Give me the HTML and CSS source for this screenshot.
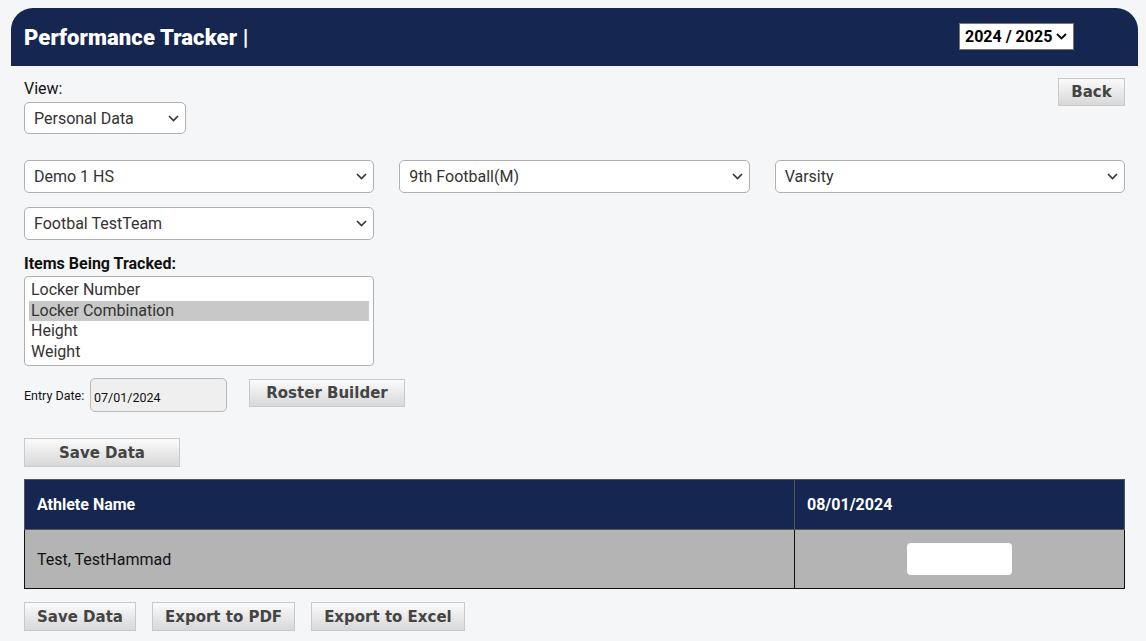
FILE: index.html
```html
<!DOCTYPE html>
<html lang="en">
<head>
<meta charset="utf-8">
<title>Performance Tracker</title>
<link rel="stylesheet" href="styles.css">
</head>
<body>
<div class="page">
  <header class="topbar">
    <h1 class="title">Performance Tracker |</h1>
    <div class="season">
      <span>2024 / 2025</span>
      <svg class="chev" width="11" height="7" viewBox="0 0 11 7"><path d="M1 1l4.5 4.5L10 1" fill="none" stroke="#000" stroke-width="1.8"/></svg>
    </div>
  </header>

  <main class="content">
    <div class="view-row">
      <div class="view-field">
        <label class="label">View:</label>
        <div class="select select-small">
          <span>Personal Data</span>
          <svg class="chev" width="11" height="7" viewBox="0 0 11 7"><path d="M1 1l4.5 4.5L10 1" fill="none" stroke="#333" stroke-width="1.6"/></svg>
        </div>
      </div>
      <button class="btn btn-back">Back</button>
    </div>

    <div class="filters">
      <div class="select">
        <span>Demo 1 HS</span>
        <svg class="chev" width="11" height="7" viewBox="0 0 11 7"><path d="M1 1l4.5 4.5L10 1" fill="none" stroke="#333" stroke-width="1.6"/></svg>
      </div>
      <div class="select">
        <span>9th Football(M)</span>
        <svg class="chev" width="11" height="7" viewBox="0 0 11 7"><path d="M1 1l4.5 4.5L10 1" fill="none" stroke="#333" stroke-width="1.6"/></svg>
      </div>
      <div class="select">
        <span>Varsity</span>
        <svg class="chev" width="11" height="7" viewBox="0 0 11 7"><path d="M1 1l4.5 4.5L10 1" fill="none" stroke="#333" stroke-width="1.6"/></svg>
      </div>
      <div class="select">
        <span>Footbal TestTeam</span>
        <svg class="chev" width="11" height="7" viewBox="0 0 11 7"><path d="M1 1l4.5 4.5L10 1" fill="none" stroke="#333" stroke-width="1.6"/></svg>
      </div>
    </div>

    <div class="tracked">
      <div class="tracked-label">Items Being Tracked:</div>
      <div class="listbox">
        <div class="option">Locker Number</div>
        <div class="option selected">Locker Combination</div>
        <div class="option">Height</div>
        <div class="option">Weight</div>
      </div>
    </div>

    <div class="entry-row">
      <label class="entry-label">Entry Date:</label>
      <div class="date-input">07/01/2024</div>
      <button class="btn btn-roster">Roster Builder</button>
    </div>

    <button class="btn btn-save">Save Data</button>

    <table class="grid">
      <thead>
        <tr>
          <th class="col-name">Athlete Name</th>
          <th class="col-date">08/01/2024</th>
        </tr>
      </thead>
      <tbody>
        <tr>
          <td class="col-name">Test, TestHammad</td>
          <td class="col-date cell-center"><div class="cell-input"></div></td>
        </tr>
      </tbody>
    </table>

    <div class="actions">
      <button class="btn btn-sm">Save Data</button>
      <button class="btn btn-sm">Export to PDF</button>
      <button class="btn btn-sm">Export to Excel</button>
    </div>
  </main>
</div>
</body>
</html>
```

FILE: styles.css
```css
* { box-sizing: border-box; }

html, body {
  margin: 0;
  background: #f5f6f8;
}

body {
  font-family: Roboto, "Liberation Sans", Arial, sans-serif;
  color: #111;
}

.page {
  padding: 8px 8px 0 11px;
}

.topbar {
  height: 58px;
  background: #152651;
  border-radius: 22px 22px 0 0;
  display: flex;
  align-items: center;
  justify-content: space-between;
  padding: 0 64px 0 13px;
}

.title {
  margin: 0;
  color: #fff;
  font-size: 22px;
  font-weight: 900;
  letter-spacing: 0.1px;
  padding-top: 1px;
}

.season {
  background: #fff;
  border: 1px solid #767676;
  height: 27px;
  width: 115px;
  display: flex;
  align-items: center;
  justify-content: space-between;
  padding: 0 6px 0 5px;
  font-size: 16px;
  font-weight: 700;
  color: #000;
  margin-top: -2px;
}

.content {
  padding: 0 13px;
}

.view-row {
  display: flex;
  justify-content: space-between;
  align-items: flex-start;
  padding-top: 13px;
}

.label {
  display: block;
  font-size: 16px;
  line-height: 20px;
  color: #111;
  margin-bottom: 3px;
}

.select {
  height: 33px;
  background: #fff;
  border: 1px solid #b0b0b0;
  border-radius: 5px;
  display: flex;
  align-items: center;
  justify-content: space-between;
  padding: 0 6px 0 9px;
  font-size: 16px;
  color: #333;
}

.select-small {
  width: 162px;
  height: 32px;
}

.filters {
  display: grid;
  grid-template-columns: repeat(3, 1fr);
  width: 1101px;
  column-gap: 25px;
  row-gap: 14px;
  margin-top: 26px;
}

.btn {
  font-family: "DejaVu Sans", Verdana, sans-serif;
  font-weight: 700;
  color: #444;
  background: linear-gradient(#fbfbfb, #d8d8d8);
  border: 1px solid #c9c9c9;
  border-radius: 0;
  cursor: pointer;
  padding: 0;
}

.btn-back {
  width: 67px;
  height: 28px;
  font-size: 15px;
  margin-top: -1px;
}

.tracked {
  margin-top: 15px;
}

.tracked-label {
  font-size: 16px;
  font-weight: 700;
  line-height: 18px;
  color: #111;
  margin-bottom: 3px;
}

.listbox {
  width: 350px;
  height: 90px;
  background: #fff;
  border: 1px solid #b0b0b0;
  border-radius: 4px;
  padding: 3px 4px 2px;
}

.option {
  font-size: 16px;
  line-height: 20.5px;
  color: #333;
  padding-left: 2px;
}

.option.selected {
  background: #c8c8c8;
}

.entry-row {
  display: flex;
  align-items: flex-start;
  margin-top: 12px;
}

.entry-label {
  font-size: 12.5px;
  color: #111;
  margin-top: 10px;
  width: 66px;
}

.date-input {
  width: 137px;
  height: 34px;
  background: #efefef;
  border: 1px solid #b8b8b8;
  border-radius: 5px;
  font-size: 12.5px;
  padding: 11px 0 0 3px;
  color: #111;
}

.btn-roster {
  width: 156px;
  height: 28px;
  font-size: 15px;
  margin-left: 22px;
  margin-top: 1px;
}

.btn-save {
  display: block;
  width: 156px;
  height: 29px;
  font-size: 15px;
  margin-top: 26px;
}

.grid {
  width: 1101px;
  margin-top: 12px;
  border-collapse: collapse;
}

.grid th {
  height: 50px;
  background: #152651;
  color: #fff;
  font-size: 16px;
  font-weight: 700;
  text-align: left;
  padding: 0 12px;
  border: 1px solid #555;
}

.grid td {
  height: 59px;
  background: #b4b4b4;
  font-size: 16px;
  color: #111;
  padding: 0 12px;
  border: 1px solid #111;
}

.col-name { width: 770px; }

.cell-center { text-align: center; }

.cell-input {
  display: inline-block;
  vertical-align: middle;
  width: 105px;
  height: 32px;
  background: #fff;
  border-radius: 4px;
}

.actions {
  display: flex;
  gap: 16px;
  margin-top: 13px;
}

.btn-sm {
  height: 29px;
  font-size: 15px;
  padding: 0 12px;
}
```
